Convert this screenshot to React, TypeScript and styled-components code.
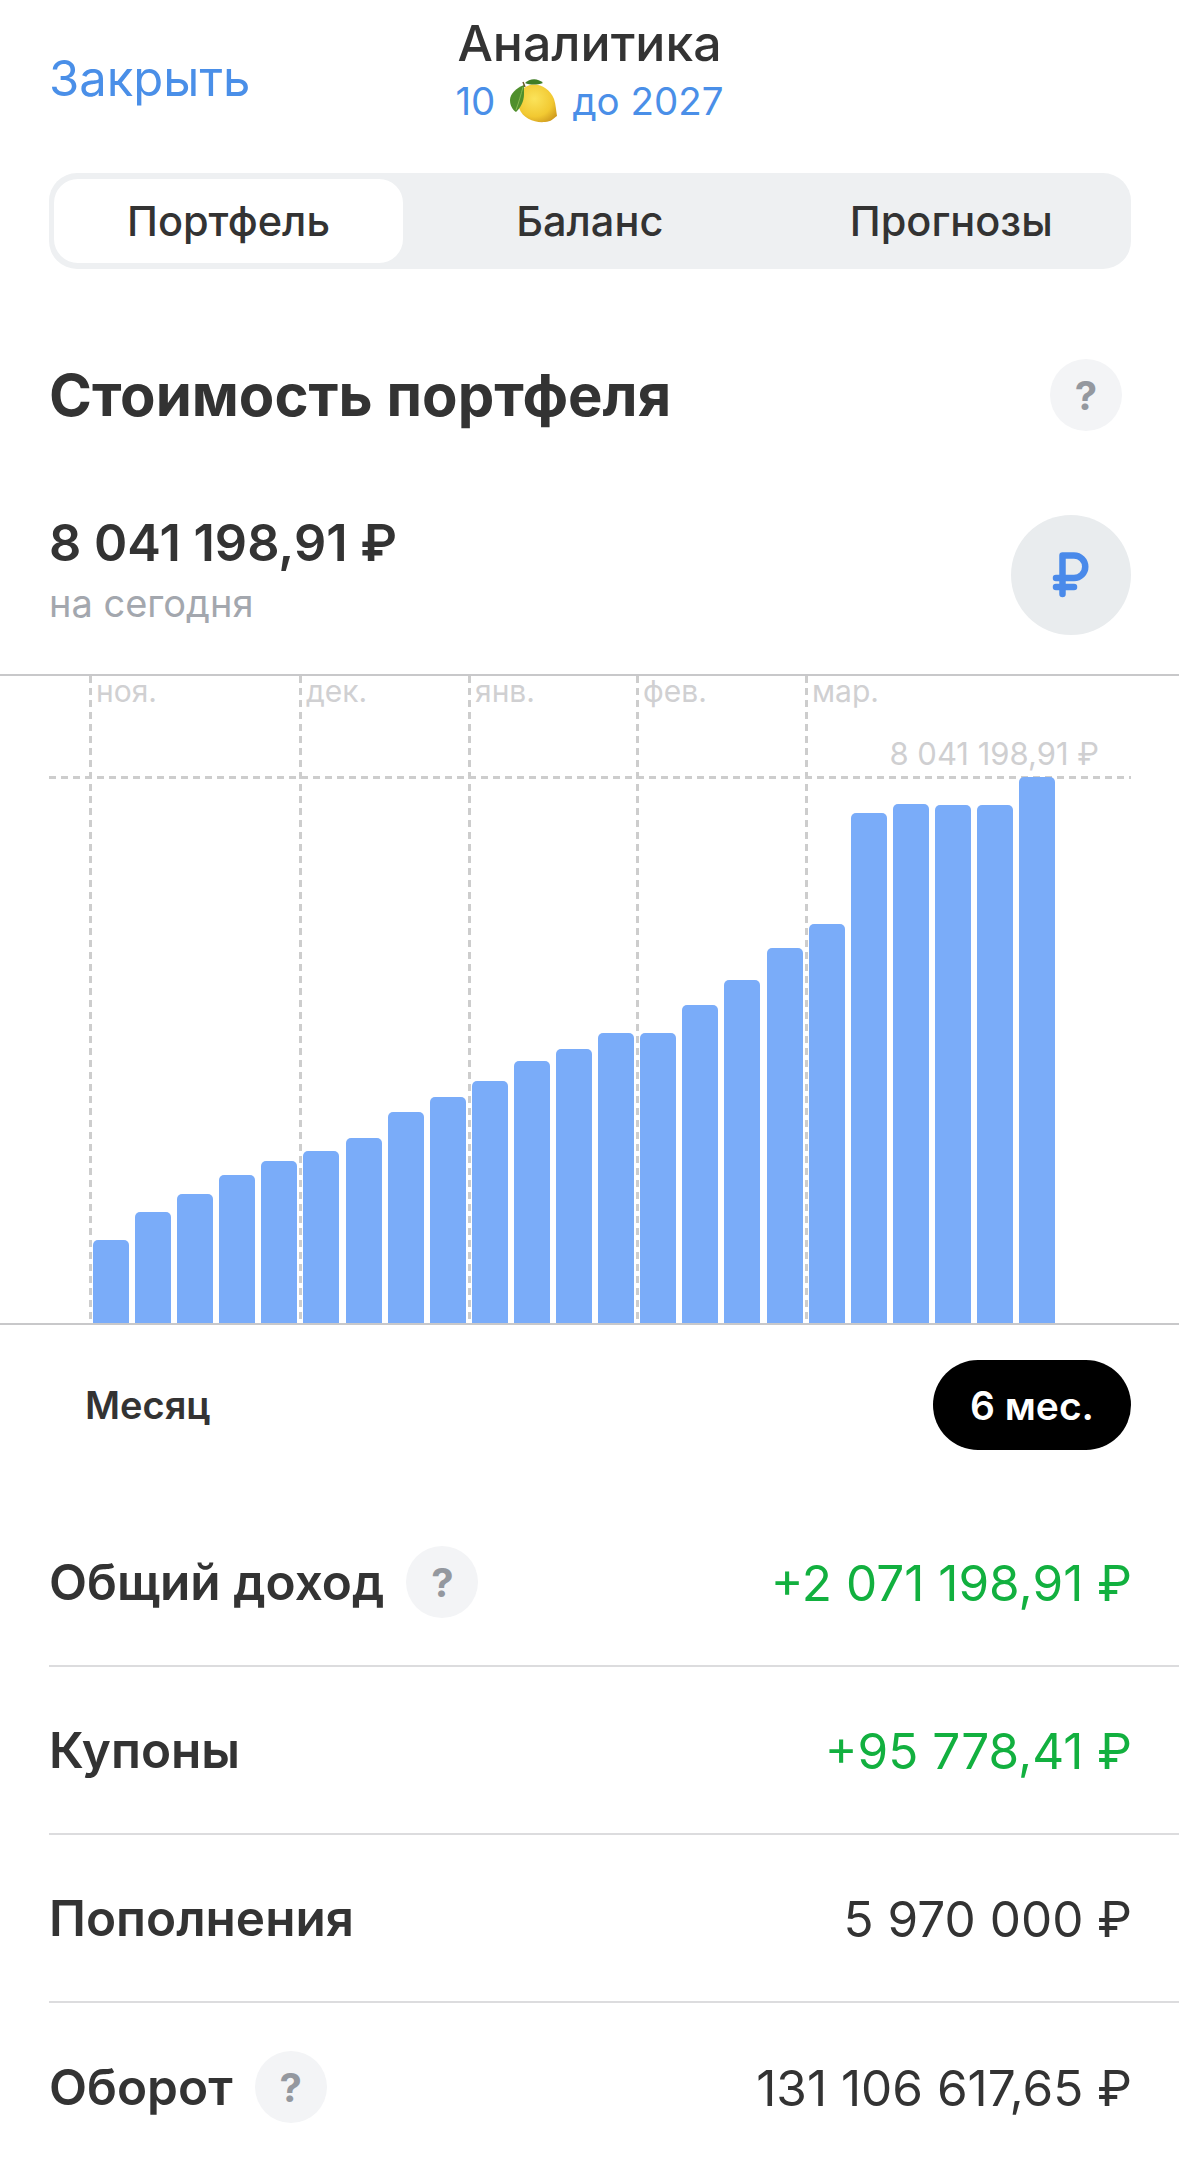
import styled, { createGlobalStyle } from 'styled-components'

const GlobalStyle = createGlobalStyle`
  html, body {
    margin: 0;
    padding: 0;
    background: #fff;
  }
  body {
    font-family: Inter, "Liberation Sans", sans-serif;
    color: #333;
  }
`

const Page = styled.div`
  width: 1179px;
  height: 2178px;
  overflow: hidden;
  background: #fff;
`

const Header = styled.header`
  display: grid;
  grid-template-columns: 1fr auto 1fr;
  align-items: center;
  height: 156px;
  padding: 0 49px;
  box-sizing: border-box;
`

const CloseLink = styled.a`
  font-size: 49px;
  color: #4a8fe8;
`

const TitleBlock = styled.div`
  display: flex;
  flex-direction: column;
  align-items: center;
  padding-bottom: 17px;
`

const Title = styled.div`
  font-size: 50px;
  line-height: 56px;
  font-weight: 550;
  color: #333;
`

const Subtitle = styled.div`
  display: flex;
  align-items: center;
  gap: 15px;
  height: 46px;
  margin-top: 7px;
  font-size: 38.5px;
  color: #4a8fe8;
`

const Tabs = styled.div`
  display: grid;
  grid-template-columns: 349px 1fr 1fr;
  align-items: stretch;
  height: 96px;
  margin: 17px 48px 0 49px;
  padding: 6px 5px;
  box-sizing: border-box;
  border-radius: 28px;
  background: #eef0f2;
`

const Tab = styled.div<{ $active?: boolean }>`
  display: flex;
  align-items: center;
  justify-content: center;
  padding-left: ${(p) => (p.$active ? '0' : '12px')};
  border-radius: 24px;
  font-size: 41.5px;
  font-weight: 500;
  color: #333;
  background: ${(p) => (p.$active ? '#fff' : 'transparent')};
`

const SectionHead = styled.div`
  display: flex;
  align-items: center;
  justify-content: space-between;
  height: 72px;
  margin-top: 90px;
  padding: 0 57px 0 49px;
`

const SectionTitle = styled.h2`
  margin: 0;
  font-size: 58px;
  font-weight: 700;
  color: #333;
`

const HelpBadge = styled.span`
  display: inline-flex;
  flex: none;
  align-items: center;
  justify-content: center;
  width: 72px;
  height: 72px;
  border-radius: 50%;
  background: #f3f4f6;
  font-size: 40px;
  font-weight: 700;
  color: #94989f;
`

const Summary = styled.div`
  display: flex;
  align-items: center;
  justify-content: space-between;
  height: 120px;
  margin-top: 84px;
  padding: 0 48px 0 49px;
`

const SummaryText = styled.div`
  display: flex;
  flex-direction: column;
  padding-bottom: 12px;
`

const SummaryValue = styled.div`
  font-size: 50.5px;
  line-height: 60px;
  font-weight: 600;
  color: #333;
`

const SummaryCaption = styled.div`
  margin-top: 8px;
  font-size: 38px;
  line-height: 44px;
  color: #a3a7ae;
`

const CurrencyCircle = styled.div`
  display: flex;
  align-items: center;
  justify-content: center;
  width: 120px;
  height: 120px;
  border-radius: 50%;
  background: #e9ecee;
`

const Chart = styled.section`
  position: relative;
  height: 647px;
  margin-top: 39px;
  border-top: 2px solid #c8c8ca;
  border-bottom: 2px solid #c8c8ca;
`

const Bars = styled.div`
  position: relative;
  display: flex;
  align-items: flex-end;
  gap: 6.1px;
  height: 100%;
  padding-left: 93px;
  box-sizing: border-box;
`

const Bar = styled.div`
  flex: none;
  width: 36px;
  border-radius: 5px 5px 0 0;
  background: #7aacf9;
`

const MonthLine = styled.div<{ $x: number }>`
  position: absolute;
  top: 0;
  bottom: 0;
  left: ${(p) => p.$x}px;
  width: 3px;
  background: repeating-linear-gradient(to bottom, #cdcdcd 0 7px, transparent 7px 12px);
`

const MonthLabel = styled.span`
  position: absolute;
  top: -2px;
  left: 7px;
  font-size: 30px;
  line-height: 34px;
  color: #d0d0d2;
`

const TopLine = styled.div`
  position: absolute;
  top: 100px;
  left: 49px;
  width: 1082px;
  height: 3px;
  background: repeating-linear-gradient(to right, #cdcdcd 0 7px, transparent 7px 12px);
`

const TopValue = styled.span`
  position: absolute;
  top: 61px;
  right: 80px;
  font-size: 31px;
  line-height: 34px;
  color: #cfcfd1;
`

const Periods = styled.div`
  display: flex;
  align-items: center;
  justify-content: space-between;
  height: 90px;
  margin-top: 35px;
  padding: 0 48px 0 85px;
`

const PeriodLabel = styled.div`
  font-size: 38px;
  font-weight: 600;
  color: #333;
`

const PeriodPill = styled.div`
  display: flex;
  align-items: center;
  justify-content: center;
  width: 198px;
  height: 90px;
  border-radius: 45px;
  background: #000;
  font-size: 39px;
  font-weight: 600;
  color: #fff;
`

const Rows = styled.div`
  margin-top: 49px;
  padding-left: 49px;
`

const Row = styled.div`
  display: flex;
  align-items: center;
  justify-content: space-between;
  height: 168px;
  padding-right: 47px;
  box-sizing: border-box;
  &:not(:last-child) {
    border-bottom: 2px solid #dcdcde;
  }
`

const RowLabel = styled.div`
  display: flex;
  align-items: center;
  gap: 22px;
  font-size: 49.5px;
  font-weight: 600;
  color: #333;
`

const RowValue = styled.div<{ $positive?: boolean }>`
  padding-top: 2px;
  font-size: 49.5px;
  color: ${(p) => (p.$positive ? '#12b03f' : '#333')};
`

const Lemon = () => (
  <svg width="47" height="46" viewBox="0 0 47 46">
    <defs>
      <radialGradient id="lemonFill" cx="0.42" cy="0.38" r="0.72">
        <stop offset="0" stopColor="#fbe35a" />
        <stop offset="0.65" stopColor="#f2c932" />
        <stop offset="1" stopColor="#cf9a1e" />
      </radialGradient>
    </defs>
    <path
      d="M20 7C30 5 40 11 44 21C46 27 46 33 47 38C44 40 41 44 35 44C25 45 13 41 9 30C6 20 11 9 20 7Z"
      fill="url(#lemonFill)"
    />
    <path d="M14 7C6 10 0 16 0 22C0 28 3 32 6 34C10 30 14 24 14 16Z" fill="#4f8f2c" />
    <path d="M15 5C19 1 27-1 33 5C27 7 20 7 15 5Z" fill="#3f7d26" />
    <path d="M13 4L15 9" stroke="#6b5a2a" strokeWidth="1.5" fill="none" />
    <path d="M13 9C11 16 9 24 6 32" stroke="#86b850" strokeWidth="1" fill="none" />
  </svg>
)

const RubleIcon = () => (
  <svg width="42" height="50" viewBox="0 0 42 50" fill="none" stroke="#4a8aea" strokeWidth="6.5" strokeLinecap="round">
    <path d="M12.5 44V5.5H24a11.25 11.25 0 0 1 0 22.5H6" strokeLinejoin="round" />
    <path d="M6 37H24" />
  </svg>
)

const barTops = [
  1240, 1212, 1194, 1175, 1161, 1151, 1138, 1112, 1097, 1081, 1061, 1049, 1033, 1033, 1005, 980, 948, 924,
  813, 804, 805, 805, 777,
]

const months = [
  { x: 89, label: 'ноя.' },
  { x: 299, label: 'дек.' },
  { x: 468, label: 'янв.' },
  { x: 636, label: 'фев.' },
  { x: 805, label: 'мар.' },
]

const App = () => {
  return (
    <Page>
      <GlobalStyle />
      <Header>
        <CloseLink>Закрыть</CloseLink>
        <TitleBlock>
          <Title>Аналитика</Title>
          <Subtitle>
            <span>10</span>
            <Lemon />
            <span>до 2027</span>
          </Subtitle>
        </TitleBlock>
      </Header>
      <Tabs>
        <Tab $active>Портфель</Tab>
        <Tab>Баланс</Tab>
        <Tab>Прогнозы</Tab>
      </Tabs>
      <SectionHead>
        <SectionTitle>Стоимость портфеля</SectionTitle>
        <HelpBadge>?</HelpBadge>
      </SectionHead>
      <Summary>
        <SummaryText>
          <SummaryValue>8 041 198,91 ₽</SummaryValue>
          <SummaryCaption>на сегодня</SummaryCaption>
        </SummaryText>
        <CurrencyCircle>
          <RubleIcon />
        </CurrencyCircle>
      </Summary>
      <Chart>
        {months.map((m) => (
          <MonthLine key={m.label} $x={m.x}>
            <MonthLabel>{m.label}</MonthLabel>
          </MonthLine>
        ))}
        <TopLine />
        <TopValue>8 041 198,91 ₽</TopValue>
        <Bars>
          {barTops.map((top, i) => (
            <Bar key={i} style={{ height: 1323 - top }} />
          ))}
        </Bars>
      </Chart>
      <Periods>
        <PeriodLabel>Месяц</PeriodLabel>
        <PeriodPill>6 мес.</PeriodPill>
      </Periods>
      <Rows>
        <Row>
          <RowLabel>
            Общий доход
            <HelpBadge>?</HelpBadge>
          </RowLabel>
          <RowValue $positive>+2 071 198,91 ₽</RowValue>
        </Row>
        <Row>
          <RowLabel>Купоны</RowLabel>
          <RowValue $positive>+95 778,41 ₽</RowValue>
        </Row>
        <Row>
          <RowLabel>Пополнения</RowLabel>
          <RowValue>5 970 000 ₽</RowValue>
        </Row>
        <Row>
          <RowLabel>
            Оборот
            <HelpBadge>?</HelpBadge>
          </RowLabel>
          <RowValue>131 106 617,65 ₽</RowValue>
        </Row>
      </Rows>
    </Page>
  )
}

export default App
